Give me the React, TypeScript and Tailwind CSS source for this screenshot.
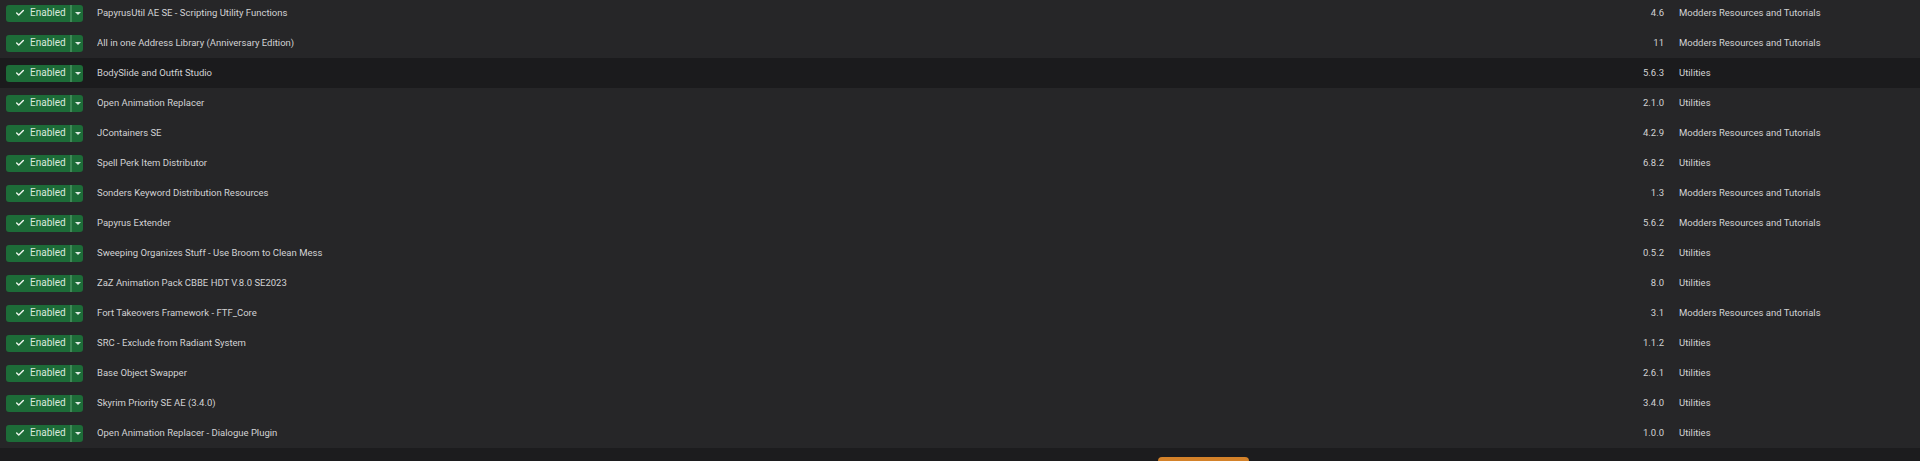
import { Check } from 'lucide-react'

interface ModRow {
  name: string
  version: string
  category: string
}

const mods: ModRow[] = [
  { name: 'PapyrusUtil AE SE - Scripting Utility Functions', version: '4.6', category: 'Modders Resources and Tutorials' },
  { name: 'All in one Address Library (Anniversary Edition)', version: '11', category: 'Modders Resources and Tutorials' },
  { name: 'BodySlide and Outfit Studio', version: '5.6.3', category: 'Utilities' },
  { name: 'Open Animation Replacer', version: '2.1.0', category: 'Utilities' },
  { name: 'JContainers SE', version: '4.2.9', category: 'Modders Resources and Tutorials' },
  { name: 'Spell Perk Item Distributor', version: '6.8.2', category: 'Utilities' },
  { name: 'Sonders Keyword Distribution Resources', version: '1.3', category: 'Modders Resources and Tutorials' },
  { name: 'Papyrus Extender', version: '5.6.2', category: 'Modders Resources and Tutorials' },
  { name: 'Sweeping Organizes Stuff - Use Broom to Clean Mess', version: '0.5.2', category: 'Utilities' },
  { name: 'ZaZ Animation Pack CBBE HDT V.8.0 SE2023', version: '8.0', category: 'Utilities' },
  { name: 'Fort Takeovers Framework - FTF_Core', version: '3.1', category: 'Modders Resources and Tutorials' },
  { name: 'SRC - Exclude from Radiant System', version: '1.1.2', category: 'Utilities' },
  { name: 'Base Object Swapper', version: '2.6.1', category: 'Utilities' },
  { name: 'Skyrim Priority SE AE (3.4.0)', version: '3.4.0', category: 'Utilities' },
  { name: 'Open Animation Replacer - Dialogue Plugin', version: '1.0.0', category: 'Utilities' },
]

function StatusButton() {
  return (
    <div className="flex h-[17px] w-[77px] shrink-0 items-stretch overflow-hidden rounded-[3px] bg-[#1d6c38]">
      <div className="flex flex-1 items-center pl-[9px]">
        <Check size={10} strokeWidth={3.5} className="text-[#e8f2ea]" />
        <span className="ml-[5px] text-[10px] leading-none text-[#dbe9de]">Enabled</span>
      </div>
      <div className="w-[2px] bg-[#3f8a57]" />
      <div className="flex w-[11px] items-center justify-center">
        <div className="h-0 w-0 border-x-[3px] border-t-[3px] border-x-transparent border-t-[#dbe9de]" />
      </div>
    </div>
  )
}

export default function App() {
  const selected = 2

  return (
    <div
      className="flex h-[461px] w-full flex-col overflow-hidden bg-[#1c1c1e] text-[#d2d2d4]"
      style={{ fontFamily: 'Roboto, "Noto Sans", sans-serif' }}
    >
      {/* Mod list */}
      <div className="h-[448px] shrink-0 overflow-hidden bg-[#262628]">
        <div className="-mt-[2px]">
          {mods.map((mod, i) => (
            <div
              key={mod.name}
              className={`flex h-[30px] items-center pl-[6px] text-[9.5px] ${i === selected ? 'bg-[#1b1b1d]' : 'bg-[#262628]'}`}
            >
              <StatusButton />
              <div className="ml-[14px] flex-1 truncate">{mod.name}</div>
              <div className="w-[80px] text-right">{mod.version}</div>
              <div className="ml-[15px] w-[241px] truncate">{mod.category}</div>
            </div>
          ))}
        </div>
      </div>

      {/* Footer actions */}
      <div className="flex flex-1 items-start bg-[#1c1c1e] pl-[1158px] pt-[9px]">
        <div className="h-[20px] w-[91px] rounded-[4px] bg-[#d4822a]" />
      </div>
    </div>
  )
}
